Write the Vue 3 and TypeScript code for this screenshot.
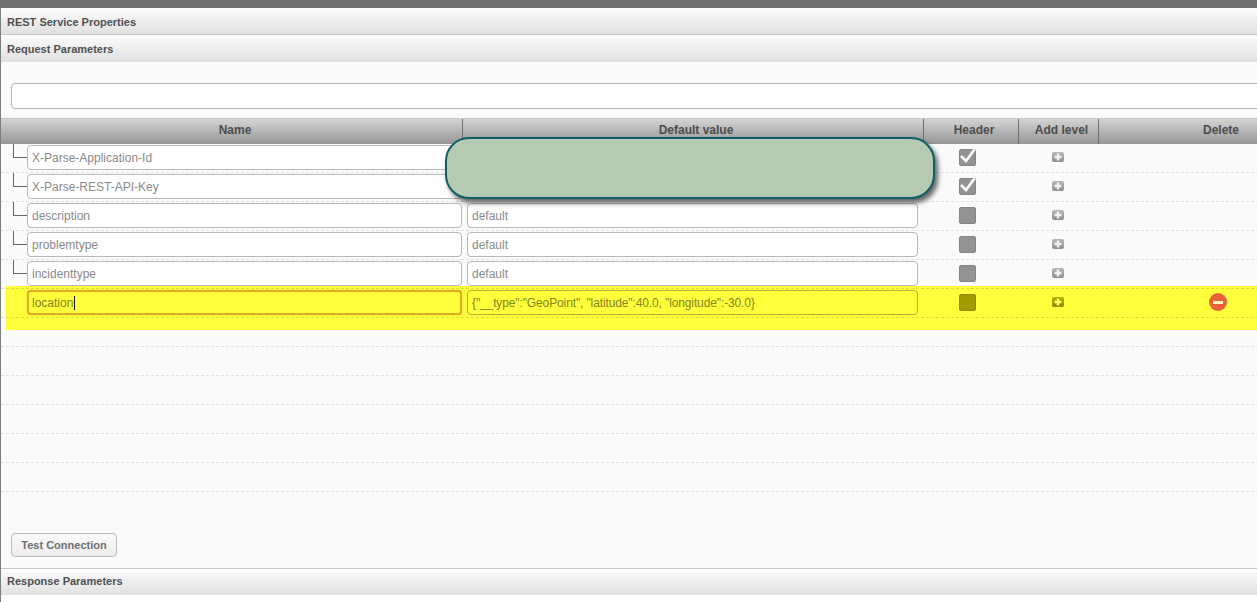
<template>
  <div class="page">
    <div class="topbar"></div>
    <div class="panel">
      <div class="section-head">REST Service Properties</div>
      <div class="section-head">Request Parameters</div>
      <div class="body">
        <div class="search"><input class="search__input" type="text" /></div>

        <div class="grid grid--head">
          <div class="th th--name">Name</div>
          <div class="th th--pad">Default value</div>
          <div class="th th--pad">Header</div>
          <div class="th th--pad">Add level</div>
          <div class="th th--last">Delete</div>
        </div>

        <div
          v-for="row in rows"
          :key="row.name"
          class="grid row"
          :class="{ 'row--active': row.active }"
        >
          <div class="cell cell--name">
            <span v-if="!row.active" class="branch"></span>
            <div class="field field--name" :class="{ 'field--focus': row.active }">
              {{ row.name }}<span v-if="row.active" class="caret"></span>
            </div>
          </div>
          <div class="cell">
            <div class="field field--value">{{ row.value }}</div>
          </div>
          <div class="cell cell--check">
            <span class="check">
              <svg v-if="row.header" width="17" height="17" viewBox="0 0 17 17">
                <path d="M2 7 L7 12 L15.5 0.5" fill="none" stroke="#fff" stroke-width="2.6" />
              </svg>
            </span>
          </div>
          <div class="cell cell--add">
            <span class="add">
              <svg width="8" height="8" viewBox="0 0 8 8">
                <path d="M4 0.5 V7.5 M0.5 4 H7.5" stroke="#eef2f8" stroke-width="2.4" />
              </svg>
            </span>
          </div>
          <div class="cell cell--delete">
            <span v-if="row.active" class="remove"><span class="remove__bar"></span></span>
          </div>
        </div>

        <div v-for="n in 6" :key="n" class="row row--empty"></div>

        <div class="actions">
          <button class="test-btn" type="button">Test Connection</button>
        </div>
      </div>
      <div class="section-head section-head--bottom">Response Parameters</div>
      <div class="body body--tail"></div>

      <div class="redaction"></div>
    </div>
  </div>
</template>

<script setup lang="ts">
interface ParamRow {
  name: string
  value: string
  header: boolean
  active?: boolean
}

const rows: ParamRow[] = [
  { name: 'X-Parse-Application-Id', value: '', header: true },
  { name: 'X-Parse-REST-API-Key', value: '', header: true },
  { name: 'description', value: 'default', header: false },
  { name: 'problemtype', value: 'default', header: false },
  { name: 'incidenttype', value: 'default', header: false },
  {
    name: 'location',
    value: '{"__type":"GeoPoint", "latitude":40.0, "longitude":-30.0}',
    header: false,
    active: true,
  },
]
</script>

<style>
html,
body {
  margin: 0;
  overflow: hidden;
  background: #fafafa;
}
</style>

<style scoped>
.page {
  width: 1257px;
  height: 602px;
  overflow: hidden;
  font-family: "Liberation Sans", Arial, sans-serif;
}

.topbar {
  height: 8px;
  background: #707070;
}

.panel {
  position: relative;
  width: 1343px;
  border-left: 1px solid #7d7d7d;
  background: #fafafa;
}

.section-head {
  height: 25px;
  padding: 1px 0 0 6px;
  border-bottom: 1px solid #c8c8c8;
  background: linear-gradient(#fcfcfc, #e0e0e0);
  font-size: 11px;
  font-weight: 700;
  line-height: 27px;
  color: #505050;
}

.section-head + .section-head {
  height: 26px;
  border-bottom: 0;
}

.section-head--bottom {
  height: 26px;
  padding-top: 0;
  border-top: 1px solid #c8c8c8;
  border-bottom: 0;
  line-height: 24px;
}

.body {
  background: #fafafa;
}

.body--tail {
  height: 8px;
  background: #fff;
}

.search {
  height: 56px;
  padding: 21px 0 0 10px;
  box-sizing: border-box;
}

.search__input {
  display: block;
  width: 1320px;
  height: 26px;
  box-sizing: border-box;
  border: 1px solid #b4b4b4;
  border-radius: 4px;
  background: #fff;
}

.grid {
  display: grid;
  grid-template-columns: 462px 461px 95px 80px 244px;
}

.grid--head {
  height: 25px;
  border-top: 1px solid #c4c4c4;
  background: linear-gradient(#d4d4d4, #969696);
}

.th {
  border-right: 1px solid #6f6f6f;
  font-size: 12px;
  font-weight: 700;
  line-height: 22px;
  text-align: center;
  color: #4c4c4c;
}

.th--name {
  padding-left: 7px;
}

.th--pad {
  padding-left: 6px;
}

.th--last {
  border-right: 0;
}

.row {
  position: relative;
  height: 29px;
  box-sizing: border-box;
  border-bottom: 1px dashed #e2e2e2;
}

.row--active {
  background: #ffffdc;
}

.row--active::before {
  content: "";
  position: absolute;
  top: -3px;
  right: 0;
  bottom: -13px;
  left: 5px;
  background: #ffff3c;
}

.row--active::after {
  content: "";
  position: absolute;
  top: -1px;
  right: 0;
  bottom: -1px;
  left: 5px;
  border-top: 1px dashed #dcdc3c;
  border-bottom: 1px dashed #dcdc3c;
}

.row--empty {
  height: 29px;
}

.cell {
  position: relative;
  z-index: 1;
  display: flex;
  align-items: flex-start;
  height: 28px;
  padding-top: 1px;
  box-sizing: border-box;
}

.cell--name {
  padding-left: 26px;
}

.cell--check {
  padding-left: 35px;
}

.cell--add {
  padding-left: 33px;
}

.cell--delete {
  padding-left: 110px;
}

.branch {
  position: absolute;
  top: 0;
  left: 12px;
  width: 13px;
  height: 13px;
  border-bottom: 1px solid #666;
  border-left: 1px solid #666;
}

.field {
  height: 25px;
  box-sizing: border-box;
  border: 1px solid #b8b8b8;
  border-radius: 4px;
  padding-left: 4px;
  background: #fff;
  font-size: 12px;
  line-height: 25px;
  color: #8a8a8a;
  white-space: nowrap;
}

.field--name {
  width: 435px;
}

.field--value {
  width: 451px;
  margin-left: 4px;
}

.row--active .field {
  border-color: #b2b23a;
  background: #ffff3c;
  color: #85851c;
  letter-spacing: -0.12px;
}

.row--active .field--focus {
  border: 2px solid #e3ab26;
  padding-left: 3px;
  line-height: 23px;
  letter-spacing: 0;
  box-shadow: 0 0 1px #d89a20;
}

.caret {
  display: inline-block;
  width: 1px;
  height: 14px;
  margin-left: 1px;
  background: #111;
  vertical-align: -3px;
}

.check {
  display: block;
  width: 17px;
  height: 17px;
  margin-top: 4px;
  border-radius: 3px;
  background: #939393;
  box-shadow: inset 0 0 0 1px #858585;
}

.check svg {
  display: block;
  overflow: visible;
}

.row--active .check {
  background: #a39c00;
  box-shadow: inset 0 0 0 1px #8f8900;
}

.add {
  display: flex;
  align-items: center;
  justify-content: center;
  width: 12px;
  height: 10px;
  margin-top: 7px;
  border-radius: 2px;
  background: linear-gradient(#b8b8b8, #8e8e8e);
}

.row--active .add {
  background: linear-gradient(#b8b400, #8c8800);
}

.row--active .add path {
  stroke: #ffff5c;
}

.remove {
  display: flex;
  align-items: center;
  justify-content: center;
  width: 18px;
  height: 18px;
  margin-top: 3px;
  border-radius: 50%;
  background: #e8603c;
}

.remove__bar {
  width: 10px;
  height: 3px;
  background: #fff8b0;
}

.actions {
  height: 76px;
  padding: 41px 0 0 10px;
  box-sizing: border-box;
}

.test-btn {
  display: block;
  width: 106px;
  height: 24px;
  padding: 0;
  border: 1px solid #bcbcbc;
  border-radius: 4px;
  background: linear-gradient(#fafafa, #ececec);
  font-family: inherit;
  font-size: 11px;
  font-weight: 700;
  color: #6e6e6e;
}

.redaction {
  position: absolute;
  z-index: 2;
  top: 129px;
  left: 444px;
  width: 486px;
  height: 58px;
  border: 2px solid #0f5f66;
  border-radius: 24px;
  background: #b5c9b3;
  box-shadow: 3px 4px 5px rgba(0, 0, 0, 0.6);
}
</style>
